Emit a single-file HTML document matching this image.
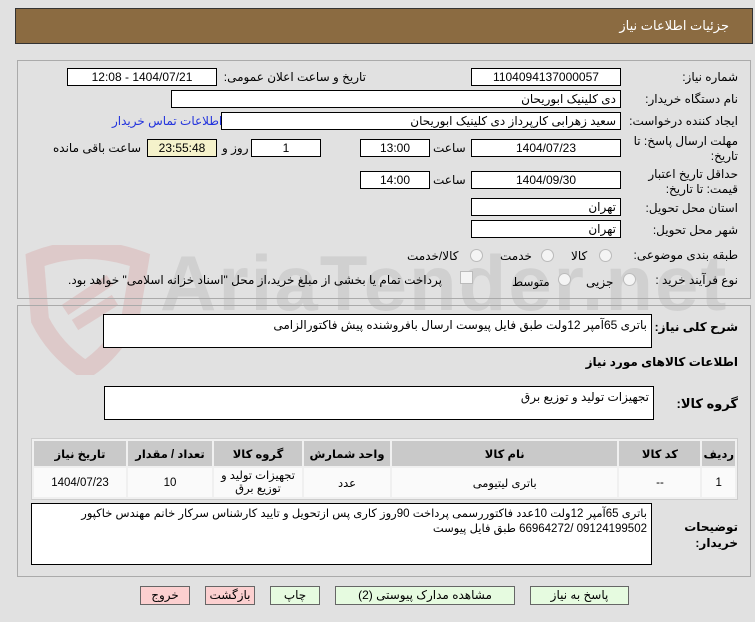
<!DOCTYPE html>
<html><head><meta charset="utf-8"><style>
body{margin:0;width:755px;height:622px;background:#e1e1e1;font-family:"Liberation Sans","DejaVu Sans",sans-serif;font-size:12px;color:#000;position:relative;overflow:hidden}
.a{position:absolute}
.box{position:absolute;background:#fff;border:1px solid #000;box-sizing:border-box;direction:rtl;padding:0 4px;line-height:16px;font-size:12px;white-space:nowrap}
.c{text-align:center}
.l{position:absolute;direction:rtl;white-space:nowrap;font-size:12px}
.rad{position:absolute;width:11px;height:11px;border-radius:50%;border:1px solid #bbb;background:#f4f4f4}
.btn{position:absolute;height:19px;border:1px solid #666;box-sizing:border-box;text-align:center;line-height:17px;font-size:12px;background:#e6fbe0;direction:rtl}
table{border-collapse:separate;border-spacing:2px;position:absolute;left:31px;top:438px;width:707px;background:#f0f0f0;border:1px solid #ccc;direction:rtl}
td{text-align:center;font-size:11.5px;background:#fafafa}
th{background:#c9c9c9;font-size:11.5px;height:23px}
</style></head><body>
<div class="a" style="width:755px;height:100px;font:bold 78px 'Liberation Sans',sans-serif;color:rgba(150,150,150,0.22);left:160px;top:238px;letter-spacing:2px">AriaTender.net</div>
<svg class="a" style="left:15px;top:245px" width="140" height="130"><path d="M20 15 Q70 -5 125 15 L115 75 Q95 110 70 125 Q40 105 25 75 Z" fill="none" stroke="rgba(210,120,120,0.22)" stroke-width="18"/><path d="M50 65 L95 35 M60 80 L100 55" stroke="rgba(210,120,120,0.22)" stroke-width="12"/></svg>
<div class="a" style="left:15px;top:8px;width:738px;height:36px;background:#8b6b41;border:1px solid #333;box-sizing:border-box"></div>
<div class="l" style="right:26px;top:18px;color:#fff;font-size:13px">جزئیات اطلاعات نیاز</div>
<div class="a" style="left:17px;top:60px;width:734px;height:239px;border:1px solid #aaa;box-sizing:border-box"></div>
<div class="a" style="left:17px;top:305px;width:734px;height:272px;border:1px solid #aaa;box-sizing:border-box"></div>

<div class="l" style="right:17px;top:70px">شماره نیاز:</div>
<div class="box c" style="left:471px;top:68px;width:150px;height:18px">1104094137000057</div>
<div class="l" style="right:389px;top:70px">تاریخ و ساعت اعلان عمومی:</div>
<div class="box c" style="left:67px;top:68px;width:150px;height:18px">1404/07/21 - 12:08</div>

<div class="l" style="right:17px;top:92px">نام دستگاه خریدار:</div>
<div class="box" style="left:171px;top:90px;width:450px;height:18px">دی کلینیک ابوریحان</div>

<div class="l" style="right:17px;top:114px">ایجاد کننده درخواست:</div>
<div class="box" style="left:221px;top:112px;width:400px;height:18px">سعید زهرابی کارپرداز دی کلینیک ابوریحان</div>
<div class="l" style="left:112px;top:114px;color:#2233dd">اطلاعات تماس خریدار</div>

<div class="l" style="right:17px;top:134px;line-height:15px">مهلت ارسال پاسخ: تا<br>تاریخ:</div>
<div class="box c" style="left:471px;top:139px;width:150px;height:18px">1404/07/23</div>
<div class="l" style="left:433px;top:141px">ساعت</div>
<div class="box c" style="left:360px;top:139px;width:70px;height:18px">13:00</div>
<div class="box c" style="left:251px;top:139px;width:70px;height:18px">1</div>
<div class="l" style="left:222px;top:141px">روز و</div>
<div class="box c" style="left:147px;top:139px;width:70px;height:18px;background:#f5f2cb">23:55:48</div>
<div class="l" style="left:53px;top:141px">ساعت باقی مانده</div>

<div class="l" style="right:17px;top:167px;line-height:15px">حداقل تاریخ اعتبار<br>قیمت: تا تاریخ:</div>
<div class="box c" style="left:471px;top:171px;width:150px;height:18px">1404/09/30</div>
<div class="l" style="left:433px;top:173px">ساعت</div>
<div class="box c" style="left:360px;top:171px;width:70px;height:18px">14:00</div>

<div class="l" style="right:17px;top:201px">استان محل تحویل:</div>
<div class="box" style="left:471px;top:198px;width:150px;height:18px">تهران</div>
<div class="l" style="right:17px;top:223px">شهر محل تحویل:</div>
<div class="box" style="left:471px;top:220px;width:150px;height:18px">تهران</div>

<div class="l" style="right:17px;top:248px">طبقه بندی موضوعی:</div>
<div class="rad" style="left:599px;top:249px"></div><div class="l" style="left:571px;top:249px">کالا</div>
<div class="rad" style="left:541px;top:249px"></div><div class="l" style="left:500px;top:249px">خدمت</div>
<div class="rad" style="left:470px;top:249px"></div><div class="l" style="left:407px;top:249px">کالا/خدمت</div>

<div class="l" style="right:17px;top:273px">نوع فرآیند خرید :</div>
<div class="rad" style="left:623px;top:273px"></div><div class="l" style="left:586px;top:275px">جزیی</div>
<div class="rad" style="left:558px;top:273px"></div><div class="l" style="left:512px;top:275px">متوسط</div>
<div class="a" style="left:460px;top:271px;width:11px;height:11px;border:1px solid #bbb;background:#f4f4f4"></div>
<div class="l" style="left:68px;top:273px">پرداخت تمام یا بخشی از مبلغ خرید،از محل "اسناد خزانه اسلامی" خواهد بود.</div>

<div class="l" style="right:17px;top:320px;font-weight:bold">شرح کلی نیاز:</div>
<div class="box" style="left:103px;top:314px;width:549px;height:34px;padding-top:2px">باتری 65آمپر 12ولت طبق فایل پیوست ارسال بافروشنده پیش فاکتورالزامی</div>
<div class="l" style="right:17px;top:355px;font-weight:bold">اطلاعات کالاهای مورد نیاز</div>
<div class="l" style="right:17px;top:396px;font-weight:bold;font-size:13px">گروه کالا:</div>
<div class="box" style="left:104px;top:386px;width:550px;height:34px;padding-top:2px">تجهیزات تولید و توزیع برق</div>

<table><tr><th style="width:25px">ردیف</th><th style="width:79px">کد کالا</th><th>نام کالا</th><th style="width:84px">واحد شمارش</th><th style="width:86px">گروه کالا</th><th style="width:82px">تعداد / مقدار</th><th style="width:90px">تاریخ نیاز</th></tr>
<tr style="height:29px"><td>1</td><td>--</td><td>باتری لیتیومی</td><td>عدد</td><td style="line-height:13px">تجهیزات تولید و توزیع برق</td><td>10</td><td>1404/07/23</td></tr></table>

<div class="l" style="right:17px;top:519px;font-weight:bold;line-height:16px">توضیحات<br>خریدار:</div>
<div class="box" style="left:31px;top:503px;width:621px;height:62px;padding-top:3px;line-height:15px;white-space:normal;font-size:11.5px">باتری 65آمپر 12ولت 10عدد فاکتوررسمی پرداخت 90روز کاری پس ازتحویل و تایید کارشناس سرکار خانم مهندس خاکپور 09124199502 /66964272 طبق فایل پیوست</div>

<div class="btn" style="left:140px;top:586px;width:50px;background:#fcd0d0">خروج</div>
<div class="btn" style="left:205px;top:586px;width:50px;background:#fcd0d0">بازگشت</div>
<div class="btn" style="left:270px;top:586px;width:50px">چاپ</div>
<div class="btn" style="left:335px;top:586px;width:180px">مشاهده مدارک پیوستی (2)</div>
<div class="btn" style="left:530px;top:586px;width:99px">پاسخ به نیاز</div>
</body></html>
